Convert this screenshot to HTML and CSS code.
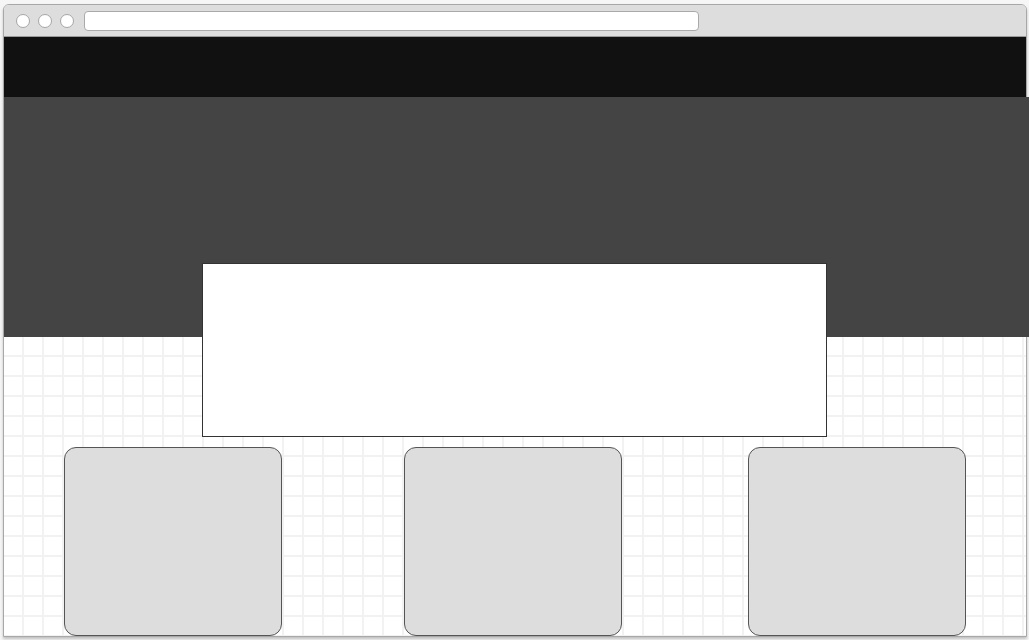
FILE: index.html
```html
<!DOCTYPE html>
<html lang="en">
<head>
<meta charset="utf-8">
<title>Wireframe</title>
<link rel="stylesheet" href="styles.css">
</head>
<body>
<div class="window">
  <div class="titlebar">
    <span class="dot"></span>
    <span class="dot"></span>
    <span class="dot"></span>
    <div class="address"></div>
  </div>
  <div class="nav"></div>
  <div class="hero"></div>
  <div class="stage">
    <div class="panel"></div>
    <div class="cards">
      <div class="card"></div>
      <div class="card"></div>
      <div class="card"></div>
    </div>
  </div>
</div>
</body>
</html>
```

FILE: styles.css
```css
html, body {
  margin: 0;
  padding: 0;
}
body {
  background: #f6f6f6;
  font-family: "Liberation Sans", Arial, sans-serif;
  overflow: hidden;
  height: 640px;
}
.window {
  box-sizing: border-box;
  width: 1024px;
  margin: 4px 0 0 3px;
  border: 1px solid #a8a8a8;
  border-radius: 6px 6px 0 0;
  box-shadow: 0 2px 3px rgba(0, 0, 0, 0.22);
  background: #fff;
}
.titlebar {
  height: 31px;
  background: #dddddd;
  border-bottom: 1px solid #9a9a9a;
  border-radius: 5px 5px 0 0;
  display: flex;
  align-items: center;
  gap: 8px;
  padding-left: 12px;
}
.dot {
  box-sizing: border-box;
  width: 14px;
  height: 14px;
  border-radius: 50%;
  background: #fff;
  border: 1px solid #a6a6a6;
  flex: none;
}
.address {
  box-sizing: border-box;
  margin-left: 2px;
  width: 615px;
  height: 20px;
  background: #fff;
  border: 1px solid #aaaaaa;
  border-radius: 4px;
}
.nav {
  height: 60px;
  background: #111111;
}
.hero {
  height: 240px;
  background: #444444;
  margin-right: -4px;
}
.stage {
  display: flow-root;
  height: 299px;
  background-color: #fff;
  background-image:
    linear-gradient(to right, transparent 18px, #f2f2f2 18px, #f2f2f2 20px),
    linear-gradient(to bottom, transparent 18px, #f2f2f2 18px, #f2f2f2 20px);
  background-size: 20px 20px;
}
.panel {
  box-sizing: border-box;
  width: 625px;
  height: 174px;
  margin: -74px 0 0 198px;
  background: #fff;
  border: 1px solid #333333;
}
.cards {
  margin-top: 10px;
  display: grid;
  grid-template-columns: repeat(3, 1fr);
  padding: 0 1px 0 0;
}
.card {
  box-sizing: border-box;
  justify-self: center;
  width: 218px;
  height: 189px;
  background: #dddddd;
  border: 1px solid #555555;
  border-radius: 12px;
}
.card:first-child {
  margin-right: 2px;
}
.card:nth-child(2) {
  margin-right: 2px;
}
.card:nth-child(3) {
  margin-left: 4px;
}
```
